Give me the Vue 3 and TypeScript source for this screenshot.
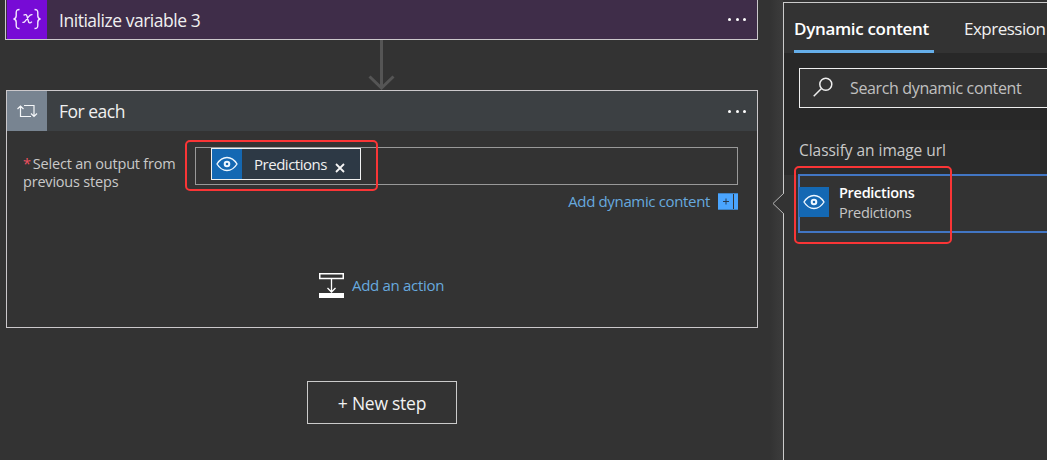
<script setup lang="ts">
const searchHint = 'Search dynamic content'
const tokenName = 'Predictions'
</script>

<template>
  <main class="designer">
    <section class="canvas">
      <article class="card variable">
        <header class="head">
          <div class="badge">
            <svg width="40" height="39" viewBox="0 0 40 39" fill="none" stroke="#f4eaff" stroke-width="1.4">
              <path d="M12.500 9.500c-3 0-3.300 1-3.300 3.200v3.100c0 2-.6 3-2.700 3.200 2.100.2 2.700 1.200 2.700 3.200v3.100c0 2.200.3 3.200 3.300 3.200M27.500 9.500c3 0 3.300 1 3.300 3.200v3.100c0 2 .6 3 2.700 3.200-2.100.2-2.700 1.200-2.700 3.200v3.100c0 2.200-.3 3.200-3.300 3.200" />
              <path d="M16.500 15.200c2-1.300 3.100-.6 3.600 1.300l1.200 4.500c.5 2.200 1.800 2.600 3.600.6M25.500 14.700c-1.500-.4-2.700.5-3.800 2l-3.500 4.500c-.9 1.300-1.700 1.500-2.800 1.100" stroke-width="1.300" />
            </svg>
          </div>
          <h2 class="t-init">Initialize variable 3</h2>
          <span class="dots"><i /><i /><i /></span>
        </header>
      </article>

      <svg class="arrow" width="28" height="50" viewBox="0 0 28 50" fill="none" stroke="#555" stroke-width="3">
        <path d="M14.500 0v48M2.500 36.500l12 11.500 12-11.500" />
      </svg>

      <article class="card loop">
        <header class="head">
          <div class="badge">
            <svg width="40" height="40" viewBox="0 0 40 40" fill="none" stroke="#f5f7f9" stroke-width="1.200">
              <path d="M13.500 15v10.500h10.500M10.500 18l3-3 3 3M17 14.500h10V25M24 22.500l3 3 3-3" />
            </svg>
          </div>
          <h2 class="t-for">For each</h2>
          <span class="dots"><i /><i /><i /></span>
        </header>
        <div class="field">
          <label><span class="t-select"><b>*</b>Select an output from</span><br><span class="t-prev">previous steps</span></label>
          <div class="input">
            <div class="token">
              <span class="eye"><svg width="24" height="18" viewBox="0 0 24 18" fill="none" stroke="#eef7ff" stroke-width="1.400"><path d="M2 9c2.500-4 6-6.500 10-6.500S19.500 5 22 9c-2.500 4-6 6.500-10 6.500S4.500 13 2 9z" /><circle cx="12" cy="9" r="2.300" stroke-width="2" /></svg></span>
              <span class="t-token">{{ tokenName }}</span>
              <svg class="close" width="10" height="10" viewBox="0 0 10 10" stroke="#f5f5f5" stroke-width="1.800"><path d="M1 1l8 8M9 1L1 9" /></svg>
            </div>
            <div class="mark mark-token" />
          </div>
        </div>
        <div class="dynamic">
          <span class="t-dynamic">Add dynamic content</span>
          <svg width="20" height="17" viewBox="0 0 20 17"><path fill="#4aa5ff" d="M0 0h15v17H0zM16 0h4v17h-4z" /><path d="M5 8.500h6M8 5.500v6" stroke="#263d54" /><path d="M0 .5h20M0 16.500h20" stroke="#3e82c4" /></svg>
        </div>
        <div class="action">
          <svg width="25" height="25" viewBox="0 0 25 25" fill="none" stroke="#fff">
            <path d="M.75 .75h23.500v4.750H.75z" stroke-width="1.500" /><path d="M12.500 6v13M8.500 15l4 4 4-4" stroke-width="1.300" /><path d="M0 22.500h25" stroke-width="5" />
          </svg>
          <span class="t-action">Add an action</span>
        </div>
      </article>
      <button class="new-step"><span class="t-new">+ New step</span></button>
    </section>

    <aside class="panel">
      <svg class="pointer" width="12" height="22" viewBox="0 0 12 22"><path d="M12 0L1 10.500 12 21" fill="#333" stroke="#b5b5b5" /></svg>
      <nav class="tabs">
        <div class="tab active"><span class="t-tab">Dynamic content</span></div>
        <div class="tab"><span class="t-expr">Expression</span></div>
      </nav>
      <div class="search-area">
        <div class="search">
          <svg width="20" height="20" viewBox="0 0 20 20" fill="none" stroke="#eee" stroke-width="1.500"><circle cx="12.800" cy="7.200" r="6" /><path d="M8.500 11.500L.7 19.200" /></svg>
          <span class="t-search">{{ searchHint }}</span>
        </div>
      </div>
      <div class="group"><span class="t-group">Classify an image url</span></div>
      <div class="option">
        <span class="eye"><svg width="24" height="18" viewBox="0 0 24 18" fill="none" stroke="#eef7ff" stroke-width="1.400"><path d="M2 9c2.500-4 6-6.500 10-6.500S19.500 5 22 9c-2.500 4-6 6.500-10 6.500S4.500 13 2 9z" /><circle cx="12" cy="9" r="2.300" stroke-width="2" /></svg></span>
        <div class="names"><strong class="t-name">{{ tokenName }}</strong><span class="t-desc">{{ tokenName }}</span></div>
        <div class="mark mark-option" />
      </div>
    </aside>
  </main>
</template>

<style>
body { overflow: hidden; background: #333; }
</style>

<style scoped>
* { box-sizing: border-box; }
.designer { display: flex; width: 1047px; height: 460px; overflow: hidden; background: #333; color: #f0f0f0; font-family: "Open Sans", "Noto Sans", sans-serif; }
.canvas { width: 783px; flex: none; display: flex; flex-direction: column; background: linear-gradient(90deg, transparent 770px, #3c3c3c); }
.card { border: 1px solid #cbc8cb; width: 752px; margin-left: 6px; }
.variable { height: 40px; width: 753px; margin-left: 5px; border-top: 0; }
.variable .head { background: #3f2d49; height: 39px; padding-left: 1px; }
.variable .badge { background: #770bd6; }
.head { display: flex; align-items: center; height: 40px; background: #3c4043; }
.badge { width: 40px; height: 100%; background: #788491; flex: none; }
.badge svg { display: block; }
h2 { margin: 0 0 0 12px; font-size: 17.500px; line-height: 24px; font-weight: 400; white-space: nowrap; }
.dots { margin-left: auto; padding-right: 11px; display: flex; gap: 4.500px; }
.dots i { width: 3px; height: 3px; border-radius: 50%; background: #fff; }
.arrow { margin-left: 367px; flex: none; }
.loop { height: 238px; background: #333; }
.field { display: flex; height: 54px; padding: 16px 0 0 16px; }
label { width: 172px; padding-top: 8px; line-height: 18px; font-size: 14.500px; color: #c9c9c9; white-space: nowrap; }
label b { color: #f05060; font-weight: 400; margin-right: 2px; }
.input { position: relative; width: 543px; height: 38px; border: 1px solid #999; padding-left: 15px; }
.token { display: flex; align-items: center; width: 150px; height: 32px; border: 1px solid #f1f1f1; background: #2d3945; font-size: 15px; }
.eye { display: flex; align-items: center; justify-content: center; width: 30px; height: 30px; background: #1468b3; flex: none; }
.token .t-token { margin-left: 12px; width: 74px; flex: none; }
.close { margin: 7px 0 0 7px; }
.mark { position: absolute; border: 2px solid #fa3536; border-radius: 5px; }
.mark-token { left: -11px; top: -8px; width: 193px; height: 51px; }
.dynamic { display: flex; justify-content: flex-end; align-items: center; gap: 8px; height: 20px; margin: 6px 19px 0 0; color: #67a9df; font-size: 15px; }
.action { display: flex; align-items: center; margin: 62px 0 0 312px; height: 25px; gap: 8px; font-size: 15px; color: #67a9df; }
.action span { margin-top: -2px; }
.new-step { display: flex; justify-content: center; align-items: center; width: 150px; height: 43px; margin: 53px 0 0 307px; padding: 0; border: 1px solid #cbcbcb; background: #333; color: #f2f2f2; font: 17.500px "Open Sans", sans-serif; }
.panel { position: relative; width: 264px; flex: none; margin-top: 2px; border: solid #cbcbcb; border-width: 1px 0 0 1px; background: #333; }
.pointer { position: absolute; left: -12px; top: 190px; }
.tabs { display: flex; height: 50px; padding-left: 10px; gap: 30px; font-size: 17px; line-height: 24px; white-space: nowrap; }
.tab { height: 50px; padding-top: 14px; flex: none; }
.active { width: 140px; border-bottom: 3px solid #65aee9; font-weight: 600; color: #fff; }
.search-area { height: 77px; background: #282828; padding: 15px 0 0 15px; }
.search { display: flex; align-items: center; height: 40px; border: 1px solid #eee; border-right: 0; background: #333; padding-left: 13px; gap: 17px; color: #c0c0c0; font-size: 16px; }
.search svg { margin-top: -3px; }
.group { height: 45px; padding: 9px 0 0 15px; background: #2b2b2b; font-size: 15.500px; line-height: 22px; color: #c9c9c9; }
.option { position: relative; display: flex; align-items: center; height: 59px; margin: -1px 0 0 14px; border: 2px solid #4276c4; border-right: 0; background: #333; }
.option .eye { margin-top: -4px; margin-left: -1px; }
.names { margin: -1px 0 0 10px; display: flex; flex-direction: column; font-size: 14.500px; line-height: 20px; color: #c6c6c6; }
.names strong { color: #fff; font-weight: 600; }
.mark-option { left: -6px; top: -10px; width: 158px; height: 78px; }
span[class^="t-"], strong { white-space: nowrap; }
.t-init { letter-spacing: -0.470px; }
.t-for { letter-spacing: -0.500px; }
.t-tab { letter-spacing: -0.320px; }
.t-expr { letter-spacing: -0.500px; }
.t-search { letter-spacing: -0.360px; }
.t-select, .t-prev { letter-spacing: -0.200px; }
.t-token { letter-spacing: -0.480px; }
.t-dynamic { letter-spacing: -0.350px; }
.t-action { letter-spacing: -0.300px; }
.t-new { letter-spacing: -0.250px; }
.t-group { letter-spacing: -0.050px; }
.t-name { letter-spacing: -0.300px; }
.t-desc { letter-spacing: -0.300px; }
</style>
